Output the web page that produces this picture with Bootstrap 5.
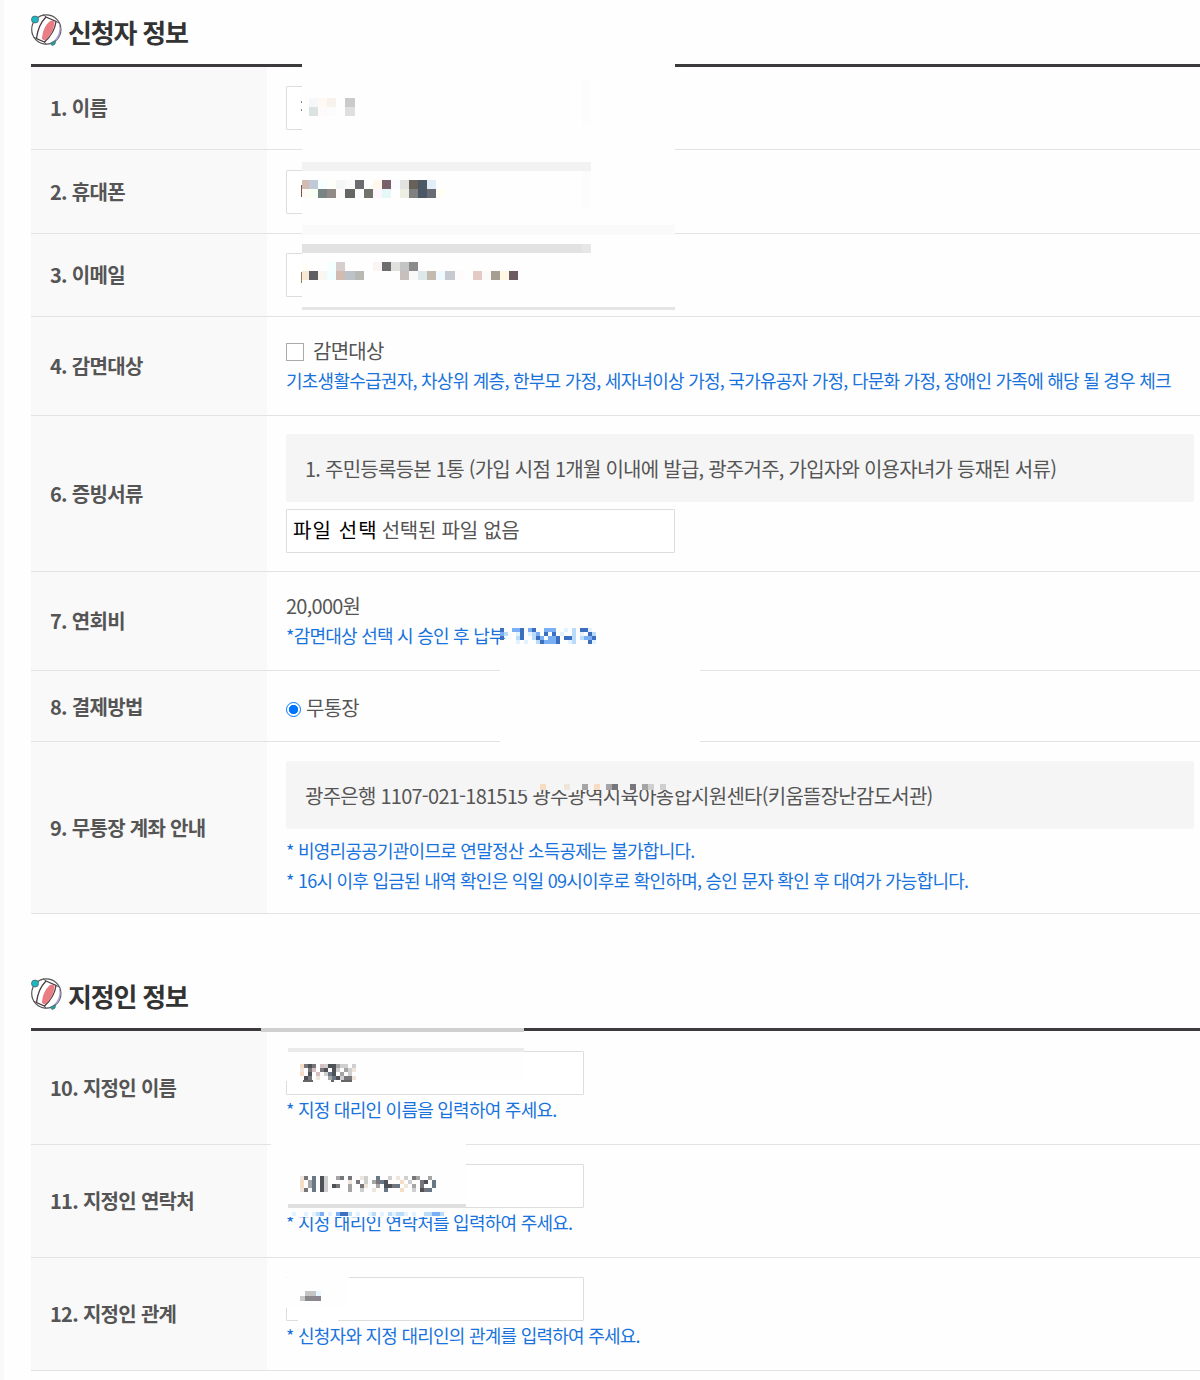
<!DOCTYPE html>
<html lang="ko">
<head>
<meta charset="utf-8">
<meta name="viewport" content="width=device-width, initial-scale=1">
<title>신청자 정보</title>
<link href="https://cdn.jsdelivr.net/npm/bootstrap@5.3.0/dist/css/bootstrap.min.css" rel="stylesheet">
<style>
body{font-family:"Noto Sans CJK KR","Noto Sans",sans-serif;font-size:20px;line-height:30px;letter-spacing:-.75px;color:#555;background:#fefefe;overflow:hidden}
.page{height:1380px;padding-left:26px;border-left:4px solid #f9f9f9;overflow:hidden}
.sec-title{height:64px;padding-top:13px;gap:6px;color:#333}
.sec-title h2{font-size:26px;line-height:38px;font-weight:700;letter-spacing:-1.2px}
.second{margin-top:50px}
.form-rows{border-top:3px solid #3c3a3c;margin-left:1px}
.f-row{border-bottom:1px solid #e3e3e3}
.f-label{width:236px;padding-left:19px;background:#f9f9f9;font-weight:700;letter-spacing:-.7px;flex:none}
.f-value{padding:0 6px 0 19px;min-width:0}
.h83{height:83px}.h84{height:84px}.h99{height:99px}.h156{height:156px}.h98{height:99px}.h71{height:71px}.h172{height:172px}.h114{height:114px}.h113{height:113px}
.h71 .f-value{padding-top:3px}.h172 .f-value{padding-top:2px}.h71 .f-label{padding-top:1px}
.field{width:298px;height:44px;border:1px solid #ddd;border-radius:1px;background:#fff}
.field.wide{width:389px;padding:0 6px 2px;letter-spacing:-.25px}
.pick{color:#000;letter-spacing:1.1px}
.hint{font-size:18px;line-height:29px;margin-bottom:1px;color:#1873dc;white-space:nowrap}
.info{height:68px;background:#f5f5f5;border-radius:2px;padding:2px 0 0 19px;margin-bottom:7px;white-space:nowrap}
.box{width:18px;height:18px;border:1px solid #aaa;background:#fff;margin-right:9px;margin-top:2px}
.dot{width:15px;height:15px;border:1.5px solid #0075ff;border-radius:50%;margin-right:5px;margin-top:3px;background:radial-gradient(circle,#0075ff 4.3px,#fff 5px)}
.veil{left:0;top:0;pointer-events:none}
</style>
<script src="https://cdn.jsdelivr.net/npm/bootstrap@5.3.0/dist/js/bootstrap.bundle.min.js"></script>
</head>
<body class="position-relative">
<svg width="0" height="0" class="position-absolute">
<defs><symbol id="ball" viewBox="0 0 32 34">
<circle cx="16.3" cy="16.5" r="14.6" fill="#fff" stroke="#555" stroke-width="1.2"/>
<path d="M27 6.5C32 15 29 25 20.500 30L24 29C31 25 33 15 27 6.500Z" fill="#aaa1d8"/>
<path d="M16 4L26 8.500C25 17 20 24 14.500 29L6.500 25.500C7.500 17 10 10 16 4Z" fill="#fff" stroke="#4b3c42" stroke-width="1.300"/>
<path d="M20 8Q23 6.500 24.500 9C24 17 20 23.500 15.500 27Q13 28 12 25.500C12.500 18 15 12.500 20 8Z" fill="#ea7d84"/>
<path d="M13 1.500L16 4M29.500 10L26 8.500M6.500 25.500L3.500 24M14.500 29L16 31.500" fill="none" stroke="#555" stroke-width="1"/>
<circle cx="5" cy="6.500" r="3.500" fill="#1db9c3" stroke="#48606a" stroke-width=".8"/>
<path d="M20.500 30L25.500 27.500Q26 32 22.500 32.500Q20.500 32 20.500 30Z" fill="#299f98" stroke="#48606a" stroke-width=".6"/>
</symbol></defs></svg>
<main class="page">
<section>
<div class="sec-title d-flex"><svg width="32" height="34"><use href="#ball"/></svg><h2 class="m-0">신청자 정보</h2></div>
<div class="form-rows">
<div class="f-row d-flex h83"><div class="f-label d-flex align-items-center">1. 이름</div><div class="f-value flex-grow-1 d-flex flex-column justify-content-center"><div class="field"></div></div></div>
<div class="f-row d-flex h84"><div class="f-label d-flex align-items-center">2. 휴대폰</div><div class="f-value flex-grow-1 d-flex flex-column justify-content-center"><div class="field"></div></div></div>
<div class="f-row d-flex h83"><div class="f-label d-flex align-items-center">3. 이메일</div><div class="f-value flex-grow-1 d-flex flex-column justify-content-center"><div class="field"></div></div></div>
<div class="f-row d-flex h99"><div class="f-label d-flex align-items-center">4. 감면대상</div><div class="f-value flex-grow-1 d-flex flex-column justify-content-center"><div class="d-flex align-items-center"><span class="box"></span>감면대상</div><div class="hint">기초생활수급권자, 차상위 계층, 한부모 가정, 세자녀이상 가정, 국가유공자 가정, 다문화 가정, 장애인 가족에 해당 될 경우 체크</div></div></div>
<div class="f-row d-flex h156"><div class="f-label d-flex align-items-center">6. 증빙서류</div><div class="f-value flex-grow-1 d-flex flex-column justify-content-center"><div class="info d-flex align-items-center">1. 주민등록등본 1통 (가입 시점 1개월 이내에 발급, 광주거주, 가입자와 이용자녀가 등재된 서류)</div><div class="field wide d-flex align-items-center"><span class="pick me-1">파일 선택</span><span>선택된 파일 없음</span></div></div></div>
<div class="f-row d-flex h98"><div class="f-label d-flex align-items-center">7. 연회비</div><div class="f-value flex-grow-1 d-flex flex-column justify-content-center"><div>20,000원</div><div class="hint">*감면대상 선택 시 승인 후 납부</div></div></div>
<div class="f-row d-flex h71"><div class="f-label d-flex align-items-center">8. 결제방법</div><div class="f-value flex-grow-1 d-flex flex-column justify-content-center"><div class="d-flex align-items-center"><span class="dot"></span>무통장</div></div></div>
<div class="f-row d-flex h172"><div class="f-label d-flex align-items-center">9. 무통장 계좌 안내</div><div class="f-value flex-grow-1 d-flex flex-column justify-content-center"><div class="info d-flex align-items-center">광주은행 1107-021-181515 광주광역시육아종합지원센타(키움뜰장난감도서관)</div><div class="hint">* 비영리공공기관이므로 연말정산 소득공제는 불가합니다.</div><div class="hint">* 16시 이후 입금된 내역 확인은 익일 09시이후로 확인하며, 승인 문자 확인 후 대여가 가능합니다.</div></div></div>
</div>
</section>
<section class="second">
<div class="sec-title d-flex"><svg width="32" height="34"><use href="#ball"/></svg><h2 class="m-0">지정인 정보</h2></div>
<div class="form-rows">
<div class="f-row d-flex h114"><div class="f-label d-flex align-items-center">10. 지정인 이름</div><div class="f-value flex-grow-1 d-flex flex-column justify-content-center"><div class="field"></div><div class="hint">* 지정 대리인 이름을 입력하여 주세요.</div></div></div>
<div class="f-row d-flex h113"><div class="f-label d-flex align-items-center">11. 지정인 연락처</div><div class="f-value flex-grow-1 d-flex flex-column justify-content-center"><div class="field"></div><div class="hint">* 지정 대리인 연락처를 입력하여 주세요.</div></div></div>
<div class="f-row d-flex h113"><div class="f-label d-flex align-items-center">12. 지정인 관계</div><div class="f-value flex-grow-1 d-flex flex-column justify-content-center"><div class="field"></div><div class="hint">* 신청자와 지정 대리인의 관계를 입력하여 주세요.</div></div></div>
</div>
</section>
</main>
<svg id="veil" class="veil position-absolute" width="1200" height="1380" shape-rendering="crispEdges" aria-hidden="true"></svg>
<script>
// Privacy layer: blank areas, then mosaic cells over personal data
const veil=document.getElementById('veil');
function cell(x,y,w,h,c){const r=document.createElementNS('http://www.w3.org/2000/svg','rect');for(const [k,v] of Object.entries({x,y,width:w,height:h,fill:c}))r.setAttribute(k,v);veil.append(r)}
[[302,60,373,247,'#fefefe'],[582,80,9,45,'#fcfcfc'],[302,162,289,9,'#f2f2f2'],[582,171,9,36,'#fcfcfc'],[302,225,373,10,'#fafafa'],[302,244,280,9,'#e2e2e2'],[582,244,9,9,'#e7e7e7'],[302,307,373,3,'#e5e5e5'],
[301,101,1,2,'#888'],[301,109,1,2,'#888'],[301,185,1,12,'#75584b'],[301,272,1,11,'#927f62'],
[500,664,200,80,'#fefefe'],[510,784,190,6,'#f5f5f5'],
[261,1028,263,4,'#d0d0d0'],[286,1049,238,32,'#fefefe'],[288,1048,236,4,'#ebebeb'],
[271,1143,195,65,'#fefefe'],[288,1204,178,4,'#e0e0e0'],[288,1212,165,5,'#fefefe'],
[287,1276,62,32,'#fefefe'],[286,1278,1,30,'#fefefe'],[298,1319,40,4,'#fefefe']].forEach(a=>cell(...a));
// wide cells: [x, colour] pairs on one line
function strip(y,o){for(const [x,c] of Object.entries(o))cell(+x,y,+x===302?7:[345,445].includes(+x)?10:9,9,'#'+c)}
strip(98,{309:'f6f7f8',318:'fff8f4',327:'f8f2ed',345:'cbcbcb'});
strip(107,{309:'dae3e1',318:'fffafa',327:'fcfcfc',345:'dfdfdf'});
strip(180,{302:'d2bbb1',309:'c0c9d8',318:'f6ffff',327:'fffffa',336:'f5f7f6',345:'fafafa',355:'6c6b70',373:'fff8eb',382:'78616a',391:'fbfbff',400:'e2e3e1',409:'66625b',418:'4b5963',427:'e2edf9'});
strip(189,{302:'fffaf4',309:'f8fff5',318:'788484',327:'918a87',336:'fffafc',345:'666664',355:'fcfcff',364:'70726b',373:'fff5ff',382:'e4f9f7',400:'ebeee0',409:'808080',418:'4b5766',427:'696c72',436:'fffff3'});
strip(262,{302:'fffff7',327:'f6ffff',336:'d6cfcd',373:'faf5f3',382:'6d6d6f',391:'e0e1dc',400:'c3c4c4',409:'8b8b8b'});
strip(271,{302:'f7e9d6',309:'5e5e64',318:'faf6f0',327:'f0ffff',336:'d2bbb0',345:'bdc2ca',355:'b9b9b4',400:'c6bfbd',409:'f9f9f9',418:'dde8ea',427:'c4b9ad',436:'eff9ff',445:'c5cace',455:'fffafc',473:'e5c9c4',482:'fafafa',491:'a69e91',500:'fff6e3',509:'6e5b62'});
// small cells: one character per cell
const ink={a:'#3d6fc0',b:'#7aaef5',c:'#b9dcfb',d:'#e2f2ff',1:'#4e5257',2:'#77777b',3:'#a5a5a5',4:'#cfcfcf',5:'#eee5dc',6:'#f5dcc2',7:'#d5bfc1',8:'#697887'};
function mosaic(x,y,w,h,rows){rows.forEach((r,j)=>[...r].forEach((k,i)=>{if(ink[k])cell(x+i*w,y+j*h,w,h,ink[k])}))}
mosaic(500,628,4,4,['a..bba.ba..bbb..d.c.aad','bc..da.dcb.a.a.d..c.d.ac','a...ca..cab.bba.aac.cbba','....d.d..cabbba..dc...ad']);
mosaic(540,784,6,6,['6...5..3.6.32..2.34.4.']);
mosaic(300,1064,4,4,['6212.7411344.4','5.27.21.14.345','6.1.7.481.3.4.','.12.5..3814225']);
[[303,1080,10],[331,1080,3],[341,1080,11]].forEach(a=>cell(a[0],a[1],a[2],1.5,'#666'));
mosaic(300,1176,4,4,['52.8.14..32.2..54..8..4.5.4.23..3.','6.38.14.....5.2.4.3281...6.4..21.8','6.38.14.12..3..25..3.1128.5.3.2..8','52.8.14.....3..4..5..8...6..4.128.']);
mosaic(288,1212,4,4,['.d..d.dcb.d.baac.d..dc.d.cdccd.d..ccbbc']);
cell(305,1291,11,5,'#c5c4c5');cell(316,1291,5,5,'#e4f6ff');cell(300,1296,5,5,'#c9c9c9');cell(305,1296,11,5,'#8a888a');cell(316,1296,5,5,'#8d8491');
</script>
</body>
</html>
